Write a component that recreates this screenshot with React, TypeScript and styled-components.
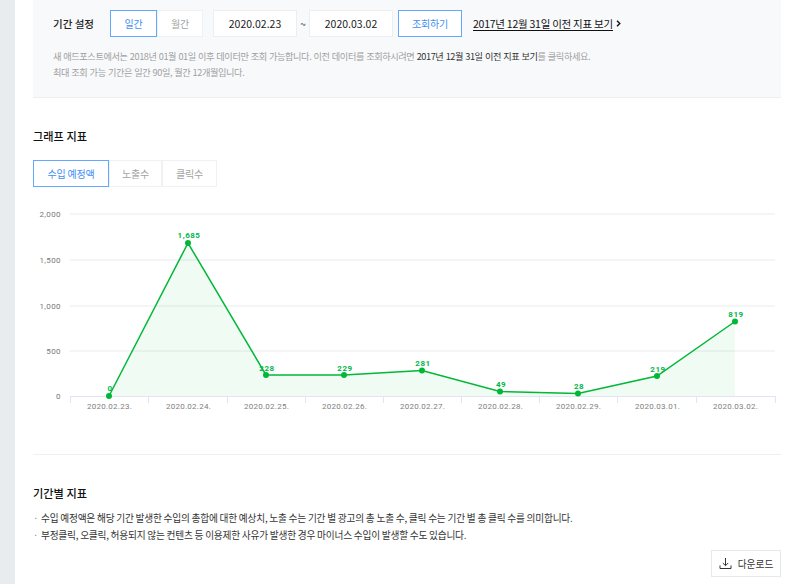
import React from 'react';
import styled, { createGlobalStyle } from 'styled-components';

const GlobalStyle = createGlobalStyle`
  html, body {
    margin: 0;
    padding: 0;
    background: #fff;
    overflow: hidden;
  }
  body {
    font-family: 'Noto Sans CJK KR', 'Noto Sans', sans-serif;
    color: #111;
  }
`;

const Page = styled.div`
  display: flex;
  width: 800px;
  height: 584px;
`;
const SideStrip = styled.div`
  width: 15px;
  background: #e8ecef;
`;
const Content = styled.div`
  width: 748px;
  margin-left: 18px;
`;
const FilterPanel = styled.div`
  box-sizing: border-box;
  height: 98px;
  padding: 10px 0 0 20px;
  background: #f8f9fb;
  border-bottom: 1px solid #eceef0;
`;
const FilterRow = styled.div`
  display: flex;
  align-items: center;
  height: 27px;
`;
const FilterLabel = styled.div`
  width: 57px;
  font-size: 10.5px;
  font-weight: 500;
  color: #222;
`;
const PeriodGroup = styled.div`
  display: flex;
  margin-right: 10px;
`;
const Tab = styled.div<{ $active?: boolean; $width: number }>`
  box-sizing: border-box;
  display: flex;
  align-items: center;
  justify-content: center;
  width: ${(p) => p.$width}px;
  height: 27px;
  background: #fff;
  border: 1px solid ${(p) => (p.$active ? '#62a8ff' : '#f0f1f3')};
  font-size: 10px;
  letter-spacing: -0.2px;
  color: ${(p) => (p.$active ? '#3f8ff5' : '#a3a3a3')};
`;
const DateInput = styled.div`
  box-sizing: border-box;
  display: flex;
  align-items: center;
  justify-content: center;
  width: 84px;
  height: 27px;
  background: #fff;
  border: 1px solid #eceef0;
  font-size: 10.5px;
  color: #222;
`;
const Tilde = styled.div`
  width: 12px;
  text-align: center;
  font-size: 10px;
  color: #444;
`;
const SearchButton = styled.div`
  box-sizing: border-box;
  display: flex;
  align-items: center;
  justify-content: center;
  width: 64px;
  height: 27px;
  margin-left: 5px;
  background: #fff;
  border: 1px solid #62a8ff;
  font-size: 10px;
  letter-spacing: -0.2px;
  color: #3f8ff5;
`;
const HistoryLink = styled.div`
  display: flex;
  align-items: center;
  margin-left: 11px;
  font-size: 10.5px;
  letter-spacing: -0.25px;
  color: #111;
  span {
    border-bottom: 1px solid #111;
    line-height: 13px;
  }
  svg {
    margin-left: 3px;
  }
`;
const Hint = styled.p`
  margin: 11px 0 0;
  font-size: 9.2px;
  letter-spacing: -0.42px;
  word-spacing: 0.6px;
  line-height: 16px;
  color: #a0a0a0;
  b {
    font-weight: 400;
    color: #333;
  }
`;
const SectionTitle = styled.h3<{ $top: number }>`
  margin: ${(p) => p.$top}px 0 0;
  font-size: 11.2px;
  line-height: 16px;
  font-weight: 500;
  color: #111;
`;
const MetricTabs = styled.div`
  display: flex;
  margin-top: 16px;
`;
const Chart = styled.svg`
  display: block;
  margin-top: 13px;
`;
const Divider = styled.div`
  height: 1px;
  margin-top: 38px;
  background: #eff0f2;
`;
const NoteList = styled.ul`
  margin: 9px 0 0;
  padding: 0;
  list-style: none;
`;
const Note = styled.li`
  display: flex;
  font-size: 9.7px;
  letter-spacing: -0.23px;
  line-height: 17px;
  color: #333;
  &::before {
    content: '·';
    width: 8px;
    color: #777;
  }
`;
const DownloadRow = styled.div`
  display: flex;
  justify-content: flex-end;
  margin-top: 6px;
`;
const DownloadButton = styled.div`
  box-sizing: border-box;
  display: flex;
  align-items: center;
  justify-content: center;
  gap: 6px;
  width: 70px;
  height: 27px;
  border: 1px solid #e6e8ea;
  font-size: 9.7px;
  color: #333;
`;

const points = [
  { date: '2020.02.23.', x: 76, y: 196, value: '0', labelY: 191 },
  { date: '2020.02.24.', x: 155, y: 43, value: '1,685', labelY: 38 },
  { date: '2020.02.25.', x: 233, y: 175, value: '228', labelY: 171 },
  { date: '2020.02.26.', x: 311, y: 175, value: '229', labelY: 171 },
  { date: '2020.02.27.', x: 389, y: 170.5, value: '281', labelY: 166 },
  { date: '2020.02.28.', x: 467, y: 191.5, value: '49', labelY: 187 },
  { date: '2020.02.29.', x: 545, y: 193.5, value: '28', labelY: 189 },
  { date: '2020.03.01.', x: 624, y: 176, value: '219', labelY: 172 },
  { date: '2020.03.02.', x: 702, y: 121.5, value: '819', labelY: 117 },
];
const grid = [
  { label: '2,000', y: 14 },
  { label: '1,500', y: 60 },
  { label: '1,000', y: 106 },
  { label: '500', y: 151 },
  { label: '0', y: 196 },
];
const ticks = [37, 115, 194, 272, 350, 428, 506, 584, 663, 742];

const line = points.map((p) => `${p.x},${p.y}`).join(' ');

const App = () => {
  return (
    <Page>
      <GlobalStyle />
      <SideStrip />
      <Content>
        <FilterPanel>
          <FilterRow>
            <FilterLabel>기간 설정</FilterLabel>
            <PeriodGroup>
              <Tab $active $width={47}>일간</Tab>
              <Tab $width={46}>월간</Tab>
            </PeriodGroup>
            <DateInput>2020.02.23</DateInput>
            <Tilde>~</Tilde>
            <DateInput>2020.03.02</DateInput>
            <SearchButton>조회하기</SearchButton>
            <HistoryLink>
              <span>2017년 12월 31일 이전 지표 보기</span>
              <svg width="5" height="7" viewBox="0 0 5 7">
                <path d="M1 .8 3.8 3.5 1 6.2" fill="none" stroke="#111" strokeWidth="1.4" />
              </svg>
            </HistoryLink>
          </FilterRow>
          <Hint>
            새 애드포스트에서는 2018년 01월 01일 이후 데이터만 조회 가능합니다. 이전 데이터를 조회하시려면{' '}
            <b>2017년 12월 31일 이전 지표 보기</b>를 클릭하세요.
            <br />
            최대 조회 가능 기간은 일간 90일, 월간 12개월입니다.
          </Hint>
        </FilterPanel>

        <SectionTitle $top={30}>그래프 지표</SectionTitle>
        <MetricTabs>
          <Tab $active $width={76}>수입 예정액</Tab>
          <Tab $width={53}>노출수</Tab>
          <Tab $width={55}>클릭수</Tab>
        </MetricTabs>

        <Chart width="748" height="216" viewBox="0 0 748 216">
          {grid.map((g) => (
            <g key={g.label}>
              {g.y < 196 && <line x1="37" x2="742" y1={g.y} y2={g.y} stroke="#f1f2f4" strokeWidth="1.4" />}
              <text x="28" y={g.y + 3} textAnchor="end" fontSize="8" fontFamily="Roboto, sans-serif" letterSpacing=".4" fill="#777">
                {g.label}
              </text>
            </g>
          ))}
          <polygon points={`76,196 ${line} 702,196`} fill="#00b33c" fillOpacity=".06" />
          <polyline points={line} fill="none" stroke="#00b837" strokeWidth="1.5" />
          <line x1="37" x2="742" y1="196.5" y2="196.5" stroke="#dfe5f2" />
          {ticks.map((x) => (
            <line key={x} x1={x + 0.5} x2={x + 0.5} y1="196" y2="203" stroke="#dfe5f2" />
          ))}
          {points.map((p) => (
            <g key={p.date}>
              <circle cx={p.x} cy={p.y} r="3" fill="#00b837" />
              <text x={p.x + 1} y={p.labelY} textAnchor="middle" fontSize="8" fontWeight="700" fontFamily="Roboto, sans-serif" letterSpacing=".5" fill="#00b84a">
                {p.value}
              </text>
              <text x={p.x + 0.5} y="208.5" textAnchor="middle" fontSize="8" fontFamily="Roboto, sans-serif" letterSpacing=".25" fill="#808080">
                {p.date}
              </text>
            </g>
          ))}
        </Chart>

        <Divider />
        <SectionTitle $top={30}>기간별 지표</SectionTitle>
        <NoteList>
          <Note>수입 예정액은 해당 기간 발생한 수입의 총합에 대한 예상치, 노출 수는 기간 별 광고의 총 노출 수, 클릭 수는 기간 별 총 클릭 수를 의미합니다.</Note>
          <Note>부정클릭, 오클릭, 허용되지 않는 컨텐츠 등 이용제한 사유가 발생한 경우 마이너스 수입이 발생할 수도 있습니다.</Note>
        </NoteList>
        <DownloadRow>
          <DownloadButton>
            <svg width="13" height="13" viewBox="0 0 13 13" fill="none" stroke="#333" strokeWidth="1">
              <path d="M6.5 1v7.5M3.8 6l2.7 2.7L9.2 6M1 8.5v3h11v-3" />
            </svg>
            다운로드
          </DownloadButton>
        </DownloadRow>
      </Content>
    </Page>
  );
};

export default App;
